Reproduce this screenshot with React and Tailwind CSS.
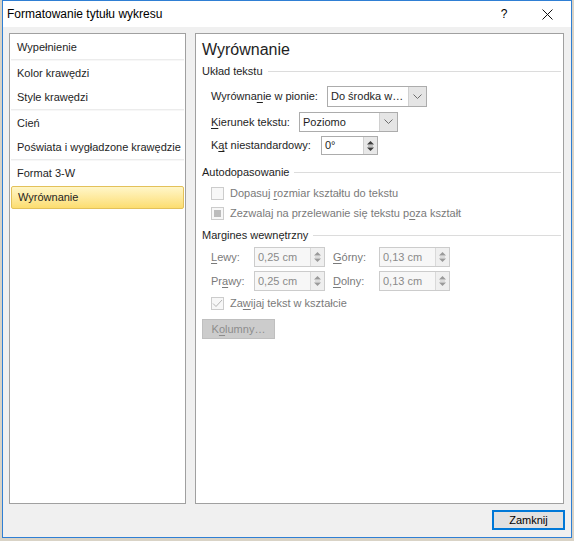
import React from 'react';

const font = { fontFamily: '"Liberation Sans", Arial, sans-serif' };

const U = ({ children }) => <span className="underline underline-offset-[2px]">{children}</span>;

const Chevron = () => (
    <svg width="9" height="6" viewBox="0 0 9 6" fill="none">
        <path d="M0.5 0.5 L4.5 4.5 L8.5 0.5" stroke="#6d6d6d" strokeWidth="1" />
    </svg>
);

const SpinArrows = ({ dim }) => (
    <svg width="7" height="12" viewBox="0 0 7 12">
        <path d="M0 4.5 L3.5 1 L7 4.5 Z" fill={dim ? '#9a9a9a' : '#3c3c3c'} />
        <path d="M0 7.5 L3.5 11 L7 7.5 Z" fill={dim ? '#9a9a9a' : '#3c3c3c'} />
        <line x1="1" y1="6" x2="6" y2="6" stroke={dim ? '#c8c8c8' : '#9a9a9a'} />
    </svg>
);

const Dropdown = ({ value, width }) => (
    <div className={`flex h-full border border-[#acacac] bg-white ${width}`}>
        <div className="flex-1 flex items-center pl-[3px] text-[#1e1e1e]">{value}</div>
        <div className="w-[18px] flex items-center justify-center bg-[#e5e5e5] border-l border-[#d0d0d0]">
            <Chevron />
        </div>
    </div>
);

const Spin = ({ value, width, dim }) => (
    <div className={`flex h-full border ${dim ? 'border-[#cccccc] bg-[#f7f7f7]' : 'border-[#acacac] bg-white'} ${width}`}>
        <div className={`flex-1 flex items-center pl-[3px] ${dim ? 'text-[#8a8a8a]' : 'text-[#1e1e1e]'}`}>{value}</div>
        <div className={`w-[14px] flex items-center justify-center border-l ${dim ? 'bg-[#efefef] border-[#d9d9d9]' : 'bg-[#e8e8e8] border-[#d0d0d0]'}`}>
            <SpinArrows dim={dim} />
        </div>
    </div>
);

const Section = ({ title }) => (
    <div className="h-[16px] flex items-center gap-[5px] text-[#1e1e1e]">
        <span>{title}</span>
        <div className="flex-1 h-[1px] bg-[#dcdcdc]" />
    </div>
);

const Check = ({ state, children }) => (
    <div className="h-[18px] flex items-center pl-[9px] text-[#7a7a7a]">
        <div className="w-[13px] h-[13px] border border-[#cccccc] bg-[#f7f7f7] flex items-center justify-center">
            {state === 'mixed' && <div className="w-[7px] h-[7px] bg-[#bcbcbc]" />}
            {state === 'checked' && (
                <svg width="11" height="9" viewBox="0 0 11 9" fill="none">
                    <path d="M1 4.5 L4 7.5 L10 1" stroke="#b5b5b5" strokeWidth="1" />
                </svg>
            )}
        </div>
        <span className="ml-[6px]">{children}</span>
    </div>
);

const menu = [
    ['Wypełnienie'],
    ['Kolor krawędzi', 'Style krawędzi'],
    ['Cień', 'Poświata i wygładzone krawędzie'],
    ['Format 3-W', 'Wyrównanie'],
];

export default function App() {
    return (
        <div className="w-[574px] h-[541px] bg-[#d9d3c6] pl-[2px] text-[11px] leading-none whitespace-nowrap" style={font}>
            <div className="w-[570px] h-[538px] border border-[#2f7fd4] bg-[#f0f0f0] flex flex-col">
                {/* title bar */}
                <div className="h-[26px] bg-white flex items-center pl-[4px] text-[12px] text-[#000]">
                    <span className="flex-1">Formatowanie tytułu wykresu</span>
                    <span className="w-[20px] text-center mr-[28px]">?</span>
                    <svg className="mr-[18px]" width="11" height="11" viewBox="0 0 11 11">
                        <path d="M0.5 0.5 L10.5 10.5 M10.5 0.5 L0.5 10.5" stroke="#111" strokeWidth="1" />
                    </svg>
                </div>

                <div className="flex gap-[9px] pl-[6px] pt-[6px]">
                    {/* left list */}
                    <div className="w-[177px] h-[471px] border border-[#a0a0a0] bg-white pt-[1px]">
                        {menu.map((group, gi) => (
                            <div key={gi}>
                                {gi > 0 && <div className="h-[2px] mx-[1px] bg-[#ececec] border-b border-[#f7f7f7]" />}
                                {group.map((item) =>
                                    item === 'Wyrównanie' ? (
                                        <div key={item} className="mx-[1px] mt-[1px] h-[23px] rounded-[2px] border border-[#e3c15a] bg-gradient-to-b from-[#fff6c8] to-[#fcdd6e] flex items-center pl-[6px] text-[#1e1e1e]">
                                            {item}
                                        </div>
                                    ) : (
                                        <div key={item} className="h-[24px] flex items-center pl-[7px] text-[#1e1e1e]">
                                            {item}
                                        </div>
                                    )
                                )}
                            </div>
                        ))}
                    </div>

                    {/* right panel */}
                    <div className="w-[369px] h-[471px] border border-[#a0a0a0] bg-white pl-[6px] pr-[2px] flex flex-col">
                        <div className="h-[24px] mt-[4px] flex items-center text-[16px] text-[#1e1e1e]">Wyrównanie</div>
                        <div className="mt-[1px]"><Section title="Układ tekstu" /></div>

                        <div className="mt-[7px] h-[21px] flex items-center pl-[9px] text-[#1e1e1e]">
                            <span className="w-[116px]">Wyrówna<U>n</U>ie w pionie:</span>
                            <Dropdown value="Do środka w…" width="w-[100px]" />
                        </div>
                        <div className="mt-[5px] h-[20px] flex items-center pl-[9px] text-[#1e1e1e]">
                            <span className="w-[88px]"><U>K</U>ierunek tekstu:</span>
                            <Dropdown value="Poziomo" width="w-[99px]" />
                        </div>
                        <div className="mt-[4px] h-[19px] flex items-center pl-[9px] text-[#1e1e1e]">
                            <span className="w-[110px]">K<U>ą</U>t niestandardowy:</span>
                            <Spin value="0°" width="w-[57px]" />
                        </div>

                        <div className="mt-[9px]"><Section title="Autodopasowanie" /></div>
                        <div className="mt-[4px]"><Check>Dopasuj <U>r</U>ozmiar kształtu do tekstu</Check></div>
                        <div className="mt-[2px]"><Check state="mixed">Zezwalaj na przelewanie się tekstu p<U>o</U>za kształt</Check></div>

                        <div className="mt-[5px]"><Section title="Margines wewnętrzny" /></div>
                        <div className="mt-[4px] h-[20px] flex items-center pl-[9px] text-[#7a7a7a]">
                            <span className="w-[43px]"><U>L</U>ewy:</span>
                            <Spin value="0,25 cm" width="w-[71px]" dim />
                            <span className="w-[54px] pl-[8px]"><U>G</U>órny:</span>
                            <Spin value="0,13 cm" width="w-[71px]" dim />
                        </div>
                        <div className="mt-[4px] h-[20px] flex items-center pl-[9px] text-[#7a7a7a]">
                            <span className="w-[43px]">Pr<U>a</U>wy:</span>
                            <Spin value="0,25 cm" width="w-[71px]" dim />
                            <span className="w-[54px] pl-[8px]"><U>D</U>olny:</span>
                            <Spin value="0,13 cm" width="w-[71px]" dim />
                        </div>
                        <div className="mt-[3px]"><Check state="checked">Za<U>w</U>ijaj tekst w kształcie</Check></div>

                        <div className="mt-[7px] w-[73px] h-[20px] bg-[#cccccc] border border-[#bfbfbf] flex items-center justify-center text-[#8c8c8c]">
                            K<U>o</U>lumny…
                        </div>
                    </div>
                </div>

                <div className="flex justify-end pr-[6px] pt-[6px]">
                    <div className="w-[73px] h-[20px] border-2 border-[#0078d7] bg-[#e1e1e1] flex items-center justify-center text-[#000]">
                        Zamknij
                    </div>
                </div>
            </div>
        </div>
    );
}
